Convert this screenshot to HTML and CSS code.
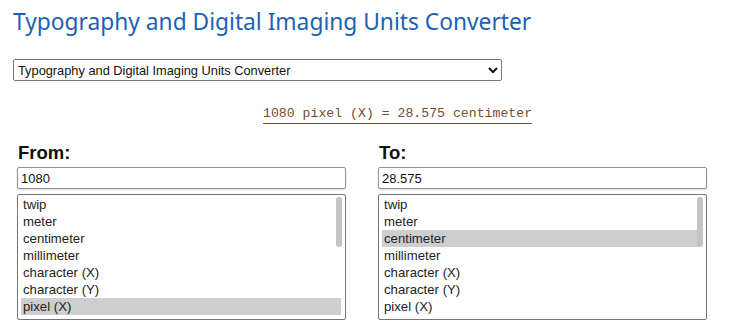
FILE: index.html
```html
<!DOCTYPE html>
<html lang="en">
<head>
    <meta charset="UTF-8">
    <title>Typography and Digital Imaging Units Converter</title>
    <link rel="stylesheet" href="styles.css">
</head>
<body>

    <h1>Typography and Digital Imaging Units Converter</h1>

    <select class="converter-pick">
        <option>Typography and Digital Imaging Units Converter</option>
    </select>

    <div class="result-row">
        <span class="result">1080 pixel (X) = 28.575 centimeter</span>
    </div>

    <div class="columns">
        <div class="col">
            <h2>From:</h2>
            <input type="text" class="value" value="1080">
            <div class="units">
                <div class="unit">twip</div>
                <div class="unit">meter</div>
                <div class="unit">centimeter</div>
                <div class="unit">millimeter</div>
                <div class="unit">character (X)</div>
                <div class="unit">character (Y)</div>
                <div class="unit selected">pixel (X)</div>
                <div class="unit">pixel (Y)</div>
                <span class="thumb"></span>
            </div>
        </div>
        <div class="col">
            <h2>To:</h2>
            <input type="text" class="value" value="28.575">
            <div class="units">
                <div class="unit">twip</div>
                <div class="unit">meter</div>
                <div class="unit selected">centimeter</div>
                <div class="unit">millimeter</div>
                <div class="unit">character (X)</div>
                <div class="unit">character (Y)</div>
                <div class="unit">pixel (X)</div>
                <div class="unit">pixel (Y)</div>
                <span class="thumb"></span>
            </div>
        </div>
    </div>

</body>
</html>
```

FILE: styles.css
```css
body {
    margin: 0;
    padding: 6px 13px 0 13px;
    font-family: "Liberation Sans", Arial, sans-serif;
    background-color: white;
    color: #222;
}

h1 {
    margin: 0;
    font-family: "Noto Sans", sans-serif;
    font-weight: normal;
    font-size: 22.75px;
    line-height: 31px;
    color: #1b62b3;
}

.converter-pick {
    display: block;
    margin-top: 22px;
    width: 489px;
    height: 22px;
    font-family: "Liberation Sans", Arial, sans-serif;
    font-size: 12.8px;
    color: #111;
    border: 1px solid #767676;
    border-radius: 2px;
    background-color: white;
    padding: 0;
}

.result-row {
    margin-top: 22px;
    padding-left: 250px;
}

.result {
    font-family: "Liberation Mono", monospace;
    font-size: 13.2px;
    color: #7a4b2c;
    border-bottom: 1px solid #7a4b2c;
    padding-bottom: 2px;
}

.columns {
    display: flex;
    gap: 32px;
    margin-top: 21px;
    padding-left: 4px;
}

.col {
    width: 329px;
}

h2 {
    margin: 0 0 3px 1px;
    font-size: 18.5px;
    line-height: 22px;
    font-weight: bold;
    color: #111;
}

.value {
    display: block;
    box-sizing: border-box;
    width: 329px;
    height: 22px;
    margin: 0;
    padding: 0 3px;
    font-family: "Liberation Sans", Arial, sans-serif;
    font-size: 13px;
    color: #111;
    border: 1px solid #8f8f8f;
    border-radius: 2px;
    box-shadow: 0 1px 2px rgba(0, 0, 0, 0.15);
}

.units {
    position: relative;
    box-sizing: border-box;
    width: 329px;
    height: 126px;
    margin-top: 5px;
    padding: 1px 4px 0 3px;
    border: 1px solid #767676;
    border-radius: 2px;
    overflow: hidden;
}

.unit {
    height: 17px;
    line-height: 17px;
    padding-left: 2px;
    font-size: 13.2px;
    color: #222;
}

.unit.selected {
    background-color: #cecece;
}

.thumb {
    position: absolute;
    top: 2px;
    right: 3px;
    width: 6px;
    height: 50px;
    border-radius: 3px;
    background-color: #c4c4c4;
}
```
